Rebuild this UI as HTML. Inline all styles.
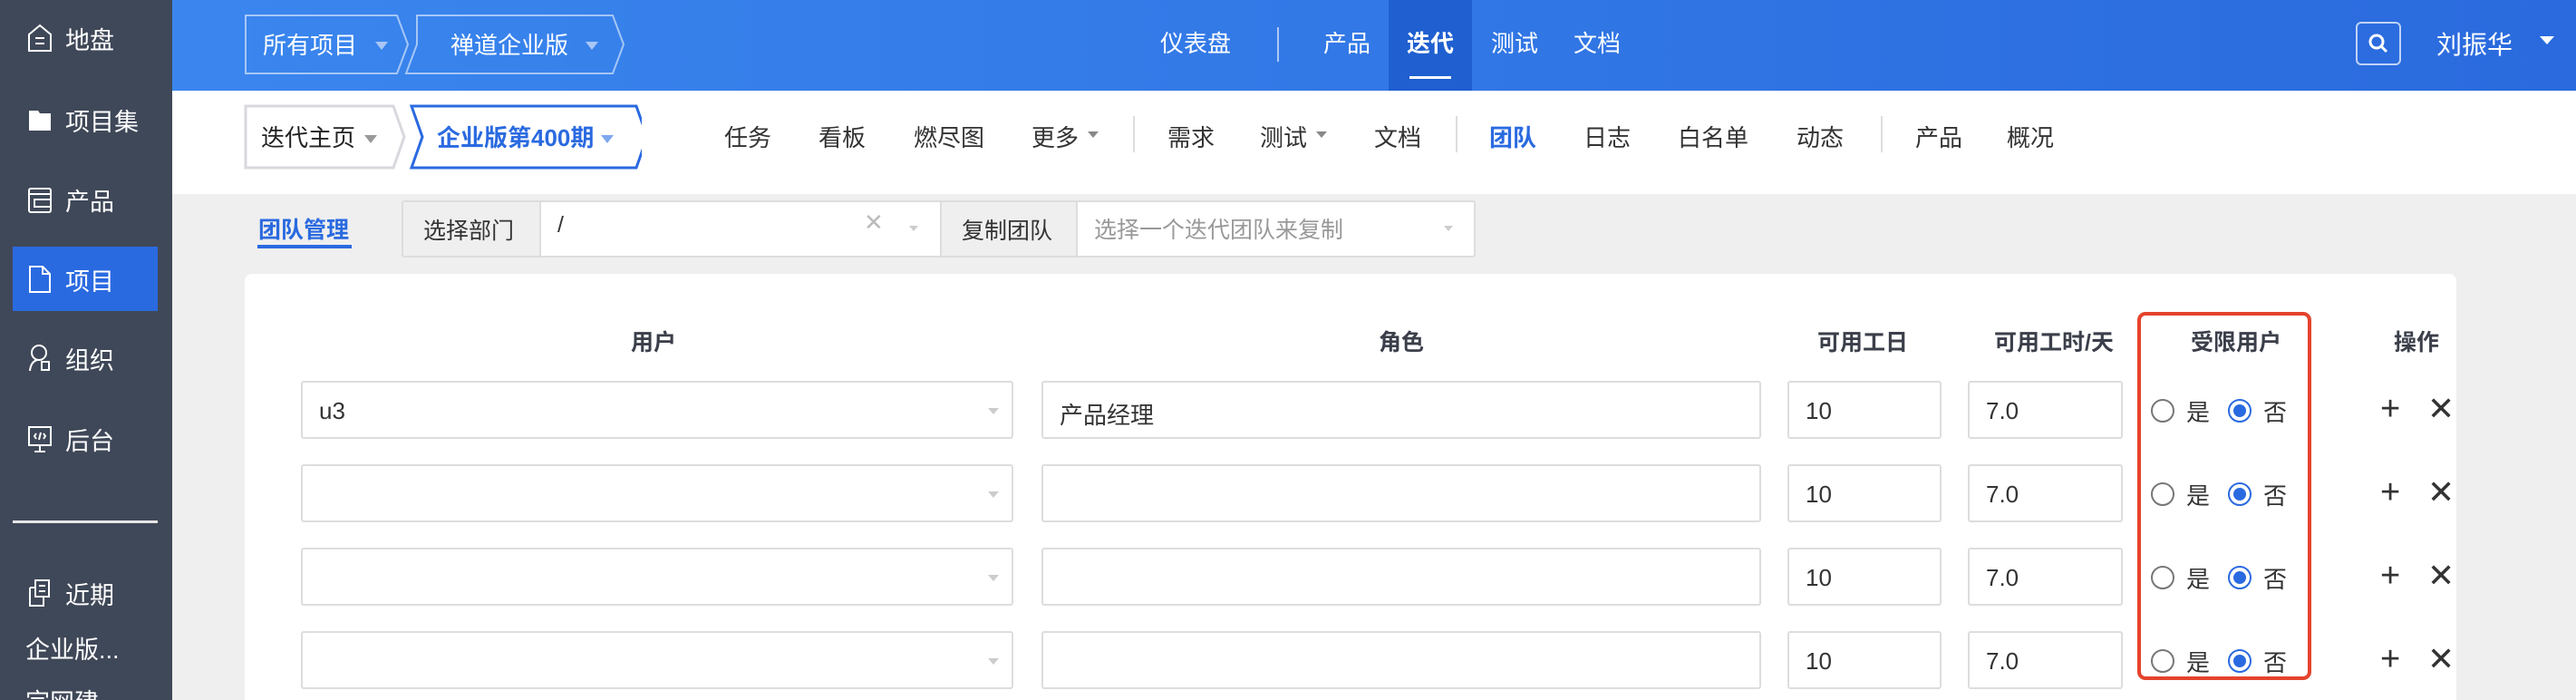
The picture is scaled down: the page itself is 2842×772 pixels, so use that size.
<!DOCTYPE html>
<html style="overflow:hidden;height:772px"><head><meta charset="utf-8"><style>
*{box-sizing:border-box;margin:0;padding:0}
body{width:2842px;height:772px;overflow:hidden;background:#efefef;font-family:"Liberation Sans","Noto Sans CJK SC",sans-serif;position:relative;color:#333}
.a{position:absolute}
#side{left:0;top:0;width:190px;height:772px;background:#3f4858}
.si{position:absolute;left:30px;color:#fff;font-size:27px;display:flex;align-items:center;gap:14px;height:40px}
.si svg{width:28px;height:32px}
#top{left:190px;top:0;width:2652px;height:100px;background:linear-gradient(90deg,#3a86ee,#2a6ade)}
#nav2{left:190px;top:100px;width:2652px;height:114px;background:#fff}
.tn{position:absolute;top:28px;color:#fff;font-size:26px}
.n2{position:absolute;top:132px;font-size:26px;color:#333}
.vd{position:absolute;width:2px;background:#ddd}
.inp{position:absolute;height:64px;border:2px solid #ddd;border-radius:3px;background:#fff;font-size:26px;padding:16px 18px;color:#333}
.th{position:absolute;top:358px;font-size:25px;font-weight:bold;color:#3b3f4a;transform:translateX(-50%)}
.car{position:absolute;right:14px;top:28px;width:0;height:0;border-left:6px solid transparent;border-right:6px solid transparent;border-top:7px solid #ccc}
.r0{position:absolute;width:26px;height:26px;border:2px solid #777;border-radius:50%}
.r1{position:absolute;width:26px;height:26px;border:2px solid #2a6ae0;border-radius:50%}
.r1:after{content:"";position:absolute;left:4px;top:4px;width:14px;height:14px;border-radius:50%;background:#2a6ae0}
.rt{position:absolute;font-size:26px;color:#333}
</style></head><body>
<div id="side" class="a">
 <div class="si" style="top:22px"><svg viewBox="0 0 28 32" fill="none" stroke="#fff" stroke-width="2"><path d="M2 12 L14 2 L26 12 V30 H2 Z M9 16 H19 M9 22 H19"/></svg>地盘</div>
 <div class="si" style="top:112px"><svg viewBox="0 0 28 32"><path d="M2 6 H12 L14 9 H26 V28 H2 Z" fill="#fff"/></svg>项目集</div>
 <div class="si" style="top:200px"><svg viewBox="0 0 28 32" fill="none" stroke="#fff" stroke-width="2"><rect x="2" y="4" width="24" height="26" rx="2"/><path d="M2 10 H26 M8 16 H26 V24 H8 Z"/></svg>产品</div>
 <div class="a" style="left:14px;top:272px;width:160px;height:71px;background:#2a6ae0"></div>
 <div class="si" style="top:288px"><svg viewBox="0 0 28 32" fill="none" stroke="#fff" stroke-width="2"><path d="M3 2 H17 L25 10 V30 H3 Z M17 2 V10 H25"/></svg>项目</div>
 <div class="si" style="top:375px"><svg viewBox="0 0 28 32" fill="none" stroke="#fff" stroke-width="2"><circle cx="13" cy="10" r="8"/><path d="M3 30 Q4 20 11 18"/><rect x="16" y="20" width="8" height="9"/></svg>组织</div>
 <div class="si" style="top:464px"><svg viewBox="0 0 28 32" fill="none" stroke="#fff" stroke-width="2"><rect x="2" y="3" width="24" height="20"/><path d="M14 23 V30 M8 30 H20 M10 10 L8 13 L10 16 M18 10 L20 13 L18 16 M15 9 L13 17"/></svg>后台</div>
 <div class="a" style="left:14px;top:574px;width:160px;height:3px;background:#e6e6e6"></div>
 <div class="si" style="top:634px"><svg viewBox="0 0 28 32" fill="none" stroke="#fff" stroke-width="2"><path d="M9 2 H24 V20 H9 Z M3 10 H9 M3 10 V30 H18 V20 M13 8 H20 M13 14 H20"/></svg>近期</div>
 <div class="si" style="top:694px;left:28px">企业版...</div>
 <div class="si" style="top:752px;left:28px">宗网建</div>
</div>
<div id="top" class="a"></div>
<svg class="a" style="left:268px;top:14px" width="430" height="72"><g fill="none" stroke="rgba(255,255,255,.55)" stroke-width="2"><path d="M3 3 H170 L182 35 L170 67 H3 Z"/><path d="M192 3 H408 L420 35 L408 67 H180 L192 35 Z"/></g><path d="M146 32 L160 32 L153 41 Z M378 32 L392 32 L385 41 Z" fill="#a9c6f5"/></svg>
<div class="a" style="left:290px;top:30px;color:#fff;font-size:26px">所有项目</div>
<div class="a" style="left:497px;top:30px;color:#fff;font-size:26px">禅道企业版</div>
<div class="a" style="left:1532px;top:0;width:92px;height:100px;background:#1f5fd0"></div>
<div class="tn" style="left:1280px">仪表盘</div>
<div class="a" style="left:1409px;top:30px;width:2px;height:38px;background:rgba(255,255,255,.6)"></div>
<div class="tn" style="left:1460px">产品</div>
<div class="tn" style="left:1552px;font-weight:bold">迭代</div>
<div class="a" style="left:1555px;top:84px;width:46px;height:3px;background:#fff"></div>
<div class="tn" style="left:1645px">测试</div>
<div class="tn" style="left:1736px">文档</div>
<div class="a" style="left:2599px;top:24px;width:50px;height:48px;border:2px solid rgba(255,255,255,.7);border-radius:6px"></div>
<svg class="a" style="left:2612px;top:36px" width="24" height="24" fill="none" stroke="#fff" stroke-width="3"><circle cx="10" cy="10" r="7"/><path d="M15 15 L21 21"/></svg>
<div class="tn" style="left:2688px;font-size:28px">刘振华</div>
<div class="a" style="left:2802px;top:40px;width:0;height:0;border-left:8px solid transparent;border-right:8px solid transparent;border-top:9px solid #fff"></div>
<div id="nav2" class="a"></div>
<svg class="a" style="left:268px;top:114px" width="440" height="74"><path d="M3 3 H166 L178 37 L166 71 H3 Z" fill="none" stroke="#d8d8de" stroke-width="3"/><path d="M186 3 H434 L446 37 L434 71 H186 L198 37 Z" fill="none" stroke="#2a6ae0" stroke-width="3"/><path d="M134 35 L148 35 L141 44 Z" fill="#999"/><path d="M395 35 L409 35 L402 44 Z" fill="#7ea8ee"/></svg>
<div class="a" style="left:288px;top:132px;font-size:26px;color:#222">迭代主页</div>
<div class="a" style="left:482px;top:132px;font-size:26px;color:#2a6ae0;font-weight:bold">企业版第400期</div>
<div class="n2" style="left:799px">任务</div>
<div class="n2" style="left:903px">看板</div>
<div class="n2" style="left:1008px">燃尽图</div>
<div class="n2" style="left:1138px">更多</div><div class="a" style="left:1200px;top:145px;border-left:6px solid transparent;border-right:6px solid transparent;border-top:7px solid #888"></div>
<div class="vd" style="left:1250px;top:128px;height:40px"></div>
<div class="n2" style="left:1288px">需求</div>
<div class="n2" style="left:1390px">测试</div><div class="a" style="left:1452px;top:145px;border-left:6px solid transparent;border-right:6px solid transparent;border-top:7px solid #888"></div>
<div class="n2" style="left:1516px">文档</div>
<div class="vd" style="left:1606px;top:128px;height:40px"></div>
<div class="n2" style="left:1643px;color:#2a6ae0;font-weight:bold">团队</div>
<div class="n2" style="left:1747px">日志</div>
<div class="n2" style="left:1851px">白名单</div>
<div class="n2" style="left:1982px">动态</div>
<div class="vd" style="left:2075px;top:128px;height:40px"></div>
<div class="n2" style="left:2113px">产品</div>
<div class="n2" style="left:2214px">概况</div>
<div class="a" style="left:285px;top:234px;font-size:25px;color:#2a6ae0;font-weight:bold">团队管理</div>
<div class="a" style="left:284px;top:270px;width:104px;height:4px;background:#2a6ae0"></div>
<div class="a" style="left:443px;top:221px;width:1185px;height:63px;border:2px solid #ddd;border-radius:3px;background:#fff"></div>
<div class="a" style="left:445px;top:223px;width:152px;height:59px;background:#efefef;border-right:2px solid #ddd;font-size:25px;padding:12px 22px;color:#333">选择部门</div>
<div class="a" style="left:615px;top:234px;font-size:25px">/</div>
<div class="a" style="left:953px;top:230px;font-size:26px;color:#bbb">✕</div>
<div class="a" style="left:1003px;top:249px;border-left:5px solid transparent;border-right:5px solid transparent;border-top:6px solid #ccc"></div>
<div class="a" style="left:1037px;top:223px;width:152px;height:59px;background:#efefef;border-left:2px solid #ddd;border-right:2px solid #ddd;font-size:25px;padding:12px 22px;color:#333">复制团队</div>
<div class="a" style="left:1207px;top:234px;font-size:25px;color:#999">选择一个迭代团队来复制</div>
<div class="a" style="left:1593px;top:249px;border-left:5px solid transparent;border-right:5px solid transparent;border-top:6px solid #ccc"></div>
<div class="a" style="left:270px;top:302px;width:2440px;height:470px;background:#fff;border-radius:8px 8px 0 0"></div>
<div class="th" style="left:721px">用户</div>
<div class="th" style="left:1546px">角色</div>
<div class="th" style="left:2055px">可用工日</div>
<div class="th" style="left:2266px">可用工时/天</div>
<div class="th" style="left:2467px">受限用户</div>
<div class="th" style="left:2666px">操作</div>
<div class="a" style="left:2358px;top:344px;width:192px;height:406px;border:4px solid #e5432d;border-radius:9px"></div>

<div class="inp" style="left:332px;top:420px;width:786px">u3<i class="car"></i></div>
<div class="inp" style="left:1149px;top:420px;width:794px">产品经理</div>
<div class="inp" style="left:1972px;top:420px;width:170px">10</div>
<div class="inp" style="left:2171px;top:420px;width:171px">7.0</div>
<div class="r0" style="left:2373px;top:440px"></div><div class="rt" style="left:2412px;top:435px">是</div><div class="r1" style="left:2458px;top:440px"></div><div class="rt" style="left:2497px;top:435px">否</div>
<div class="rt" style="left:2626px;top:430px;font-size:38px">+</div><div class="rt" style="left:2678px;top:430px;font-size:36px">✕</div>

<div class="inp" style="left:332px;top:512px;width:786px"><i class="car"></i></div>
<div class="inp" style="left:1149px;top:512px;width:794px"></div>
<div class="inp" style="left:1972px;top:512px;width:170px">10</div>
<div class="inp" style="left:2171px;top:512px;width:171px">7.0</div>
<div class="r0" style="left:2373px;top:532px"></div><div class="rt" style="left:2412px;top:527px">是</div><div class="r1" style="left:2458px;top:532px"></div><div class="rt" style="left:2497px;top:527px">否</div>
<div class="rt" style="left:2626px;top:522px;font-size:38px">+</div><div class="rt" style="left:2678px;top:522px;font-size:36px">✕</div>

<div class="inp" style="left:332px;top:604px;width:786px"><i class="car"></i></div>
<div class="inp" style="left:1149px;top:604px;width:794px"></div>
<div class="inp" style="left:1972px;top:604px;width:170px">10</div>
<div class="inp" style="left:2171px;top:604px;width:171px">7.0</div>
<div class="r0" style="left:2373px;top:624px"></div><div class="rt" style="left:2412px;top:619px">是</div><div class="r1" style="left:2458px;top:624px"></div><div class="rt" style="left:2497px;top:619px">否</div>
<div class="rt" style="left:2626px;top:614px;font-size:38px">+</div><div class="rt" style="left:2678px;top:614px;font-size:36px">✕</div>

<div class="inp" style="left:332px;top:696px;width:786px"><i class="car"></i></div>
<div class="inp" style="left:1149px;top:696px;width:794px"></div>
<div class="inp" style="left:1972px;top:696px;width:170px">10</div>
<div class="inp" style="left:2171px;top:696px;width:171px">7.0</div>
<div class="r0" style="left:2373px;top:716px"></div><div class="rt" style="left:2412px;top:711px">是</div><div class="r1" style="left:2458px;top:716px"></div><div class="rt" style="left:2497px;top:711px">否</div>
<div class="rt" style="left:2626px;top:706px;font-size:38px">+</div><div class="rt" style="left:2678px;top:706px;font-size:36px">✕</div>
</body></html>
